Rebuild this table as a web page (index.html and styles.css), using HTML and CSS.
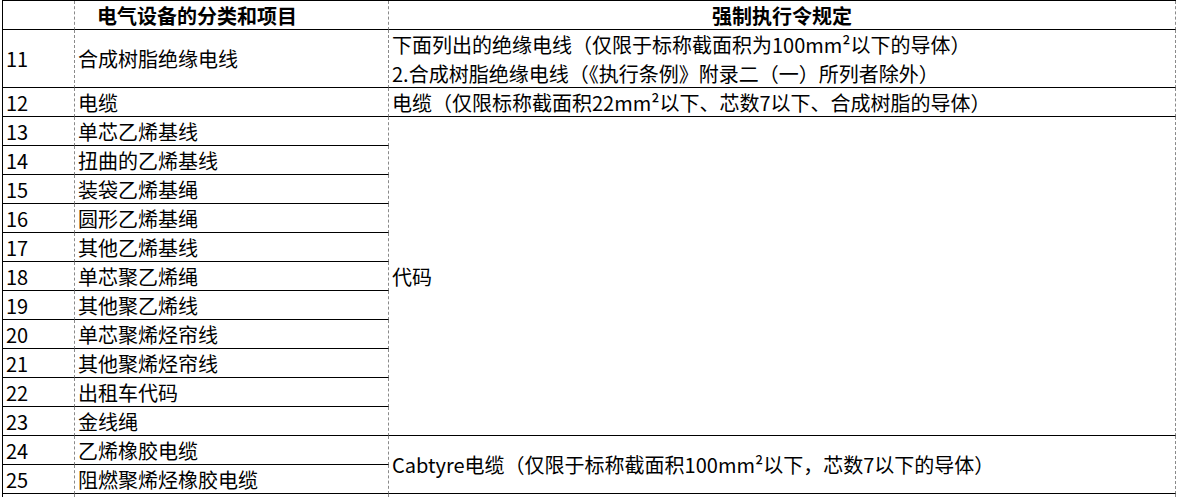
FILE: index.html
```html
<!DOCTYPE html>
<html lang="zh-CN">
<head>
<meta charset="utf-8">
<title>电气设备的分类和项目</title>
<link rel="stylesheet" href="styles.css">
</head>
<body>
<div class="sheet">
  <div class="cell c1 head"></div>
  <div class="cell c2 head head-left">电气设备的分类和项目</div>
  <div class="cell c3 head head-right">强制执行令规定</div>

  <div class="cell c1 tall">11</div>
  <div class="cell c2 tall">合成树脂绝缘电线</div>
  <div class="cell c3 tall multi">
    <div class="line">下面列出的绝缘电线（仅限于标称截面积为100mm²以下的导体）</div>
    <div class="line">2.合成树脂绝缘电线（《执行条例》附录二（一）所列者除外）</div>
  </div>

  <div class="cell c1">12</div>
  <div class="cell c2">电缆</div>
  <div class="cell c3">电缆（仅限标称截面积22mm²以下、芯数7以下、合成树脂的导体）</div>

  <div class="cell c1">13</div>
  <div class="cell c2">单芯乙烯基线</div>
  <div class="cell c3 span11">代码</div>
  <div class="cell c1">14</div>
  <div class="cell c2">扭曲的乙烯基线</div>
  <div class="cell c1">15</div>
  <div class="cell c2">装袋乙烯基绳</div>
  <div class="cell c1">16</div>
  <div class="cell c2">圆形乙烯基绳</div>
  <div class="cell c1">17</div>
  <div class="cell c2">其他乙烯基线</div>
  <div class="cell c1">18</div>
  <div class="cell c2">单芯聚乙烯绳</div>
  <div class="cell c1">19</div>
  <div class="cell c2">其他聚乙烯线</div>
  <div class="cell c1">20</div>
  <div class="cell c2">单芯聚烯烃帘线</div>
  <div class="cell c1">21</div>
  <div class="cell c2">其他聚烯烃帘线</div>
  <div class="cell c1">22</div>
  <div class="cell c2">出租车代码</div>
  <div class="cell c1">23</div>
  <div class="cell c2">金线绳</div>

  <div class="cell c1">24</div>
  <div class="cell c2">乙烯橡胶电缆</div>
  <div class="cell c3 span2">Cabtyre电缆（仅限于标称截面积100mm²以下，芯数7以下的导体）</div>
  <div class="cell c1">25</div>
  <div class="cell c2">阻燃聚烯烃橡胶电缆</div>

  <div class="cell c1 tail"></div>
  <div class="cell c2 tail"></div>
  <div class="cell c3 tail"></div>
</div>
</body>
</html>
```

FILE: styles.css
```css
html, body {
  margin: 0;
  padding: 0;
  background: #ffffff;
}

body {
  font-family: "Noto Sans CJK SC", "Noto Sans", sans-serif;
  font-size: 20px;
  color: #000000;
  overflow: hidden;
}

.sheet {
  margin-left: 2px;
  display: grid;
  grid-template-columns: 72px 314px 787px;
  grid-template-rows: 29px 58px 29px repeat(13, 29px) 10px;
  border-top: 1px solid #000000;
  border-left: 1px solid #000000;
  width: 1173px;
}

.cell {
  box-sizing: border-box;
  border-bottom: 1px solid #000000;
  border-right: 1px dashed #8a8a8a;
  display: flex;
  align-items: center;
  white-space: nowrap;
  line-height: 29px;
  overflow: visible;
}

.c1 { grid-column: 1; padding-left: 3px; }
.c2 { grid-column: 2; padding-left: 3px; }
.c3 { grid-column: 3; padding-left: 3px; }

.head {
  font-weight: bold;
}
.head-left { padding-left: 22px; }
.head-right {
  padding-left: 0;
  justify-content: center;
}

.multi {
  flex-direction: column;
  align-items: flex-start;
  justify-content: center;
}

.span11 { grid-row: span 11; }
.span2 { grid-row: span 2; }

.tail {
  border-bottom: none;
}
```
